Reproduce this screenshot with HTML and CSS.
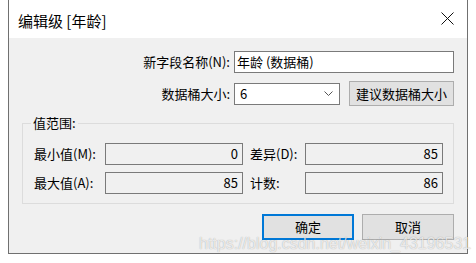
FILE: index.html
```html
<!DOCTYPE html>
<html lang="zh-CN">
<head>
  <meta charset="UTF-8" />
  <title>编辑级 [年龄]</title>
  <link rel="stylesheet" href="styles.css">
</head>
<body>
<div class="dialog">

  <!-- TITLE BAR -->
  <div class="titlebar">
    <span class="title">编辑级 [年龄]</span>
    <svg class="close" width="13" height="13" viewBox="0 0 13 13">
      <path d="M0.5 0.5 L12.5 12.5 M12.5 0.5 L0.5 12.5" stroke="#111" stroke-width="1" fill="none" />
    </svg>
  </div>

  <div class="body">

    <!-- FIELD NAME / BIN SIZE -->
    <div class="form">
      <label class="lbl">新字段名称(N):</label>
      <div class="input">年龄 (数据桶)</div>

      <label class="lbl">数据桶大小:</label>
      <div class="size-row">
        <div class="select">
          <span>6</span>
          <svg width="9" height="5" viewBox="0 0 9 5">
            <path d="M0.5 0.5 L4.5 4.5 L8.5 0.5" stroke="#555" stroke-width="1" fill="none" />
          </svg>
        </div>
        <button class="btn btn-suggest">建议数据桶大小</button>
      </div>
    </div>

    <!-- RANGE -->
    <fieldset class="group">
      <legend>值范围:</legend>
      <div class="range">
        <span class="rlbl">最小值(M):</span>
        <div class="readonly">0</div>
        <span class="rlbl second">差异(D):</span>
        <div class="readonly">85</div>

        <span class="rlbl">最大值(A):</span>
        <div class="readonly">85</div>
        <span class="rlbl second">计数:</span>
        <div class="readonly">86</div>
      </div>
    </fieldset>

    <!-- ACTIONS -->
    <div class="actions">
      <button class="btn btn-ok">确定</button>
      <button class="btn">取消</button>
    </div>
  </div>

  <div class="watermark">https://blog.csdn.net/weixin_43196531</div>
</div>
</body>
</html>
```

FILE: styles.css
```css
* { box-sizing: border-box; margin: 0; padding: 0; }
body {
  font-family: "Noto Sans CJK SC", "Noto Sans", sans-serif;
  font-size: 13px;
  color: #000;
  background: #fff;
}

/* WINDOW */
.dialog {
  position: relative;
  width: 460px;
  margin-left: 8px;
  border: 1px solid #707070;
  border-top: none;
  background: #f0f0f0;
}

.titlebar {
  display: flex;
  align-items: center;
  justify-content: space-between;
  height: 38px;
  padding: 3px 13px 0 9px;
  background: #fff;
}
.title { font-size: 15px; line-height: 20px; }
.close { display: block; margin-top: -4px; }

.body { padding: 13px; }

/* FORM */
.form {
  display: grid;
  grid-template-columns: 208px 220px;
  column-gap: 4px;
  row-gap: 8px;
  align-items: center;
}
.lbl { text-align: right; line-height: 18px; }
.input {
  height: 22px;
  border: 1px solid #7a7a7a;
  background: #fff;
  padding-left: 2px;
  line-height: 20px;
}
.size-row { display: flex; align-items: center; justify-content: space-between; }
.select {
  display: flex;
  align-items: center;
  justify-content: space-between;
  width: 106px;
  height: 22px;
  border: 1px solid #7a7a7a;
  background: #fff;
  padding: 0 6px 0 5px;
  line-height: 20px;
}
.select svg { display: block; }

/* BUTTONS */
.btn {
  font-family: inherit;
  font-size: 13px;
  color: #000;
  background: #e1e1e1;
  border: 1px solid #adadad;
  line-height: 18px;
}
.btn-suggest { width: 105px; height: 25px; }

/* RANGE GROUP */
.group {
  margin-top: 9px;
  border: 1px solid #dcdcdc;
  padding: 12px 10px 9px 11px;
  min-width: 0;
}
.group legend {
  line-height: 16px;
  padding: 0 2px;
  margin-left: -3px;
}
.range {
  display: grid;
  grid-template-columns: 71px 138px 62px 138px;
  row-gap: 7px;
  align-items: center;
}
.rlbl { line-height: 18px; }
.rlbl.second { padding-left: 7px; }
.readonly {
  height: 22px;
  border: 1px solid #7a7a7a;
  background: #f0f0f0;
  text-align: right;
  padding-right: 4px;
  line-height: 20px;
}

.actions {
  display: flex;
  justify-content: flex-end;
  gap: 8px;
  margin-top: 10px;
}
.actions .btn { width: 92px; height: 26px; }
.btn-ok { border: 2px solid #0078d7; }

/* WATERMARK */
.watermark {
  position: absolute;
  left: 190px;
  top: 236px;
  font-family: "Liberation Sans", Arial, sans-serif;
  font-size: 16px;
  line-height: 16px;
  color: rgba(255, 255, 255, 0.75);
  text-shadow: 0 0 1px rgba(0, 0, 0, 0.35);
  white-space: nowrap;
}
```
